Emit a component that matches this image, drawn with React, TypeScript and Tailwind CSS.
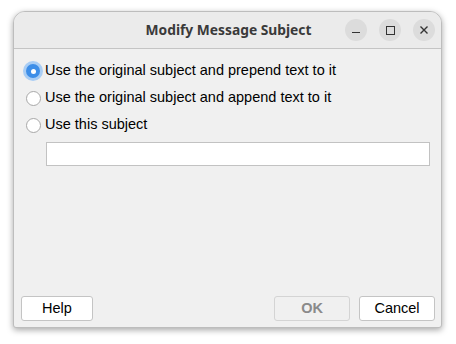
import React, { useState } from "react"

const options = [
	"Use the original subject and prepend text to it",
	"Use the original subject and append text to it",
	"Use this subject",
]

function Radio({ checked }: { checked: boolean }) {
	if (checked) {
		return (
			<span className="relative flex h-[16px] w-[16px] items-center justify-center">
				<span className="absolute -inset-[2px] rounded-full bg-[#a9cdf4]" />
				<span className="relative flex h-[14px] w-[14px] items-center justify-center rounded-full bg-[#3d8ee8]">
					<span className="h-[5px] w-[5px] rounded-full bg-white" />
				</span>
			</span>
		)
	}
	return (
		<span className="flex h-[16px] w-[16px] items-center justify-center">
			<span className="h-[15px] w-[15px] rounded-full border border-[#a8a8a8] bg-white" />
		</span>
	)
}

export default function App() {
	const [choice, setChoice] = useState(0)

	return (
		<div className="h-[344px] w-[456px] bg-white pl-[13px] pt-[11px]" style={{ fontFamily: "'Liberation Sans', Arial, sans-serif" }}>
			<div className="flex h-[317px] w-[429px] flex-col overflow-hidden rounded-t-[12px] rounded-b-[3px] border border-[#bdbdbd] bg-[#f0f0f0] shadow-[0_2px_6px_rgba(0,0,0,0.35)]">
				{/* title bar */}
				<div className="relative flex h-[37px] shrink-0 items-center justify-center border-b border-[#c4c4c4] bg-[#ebebeb]">
					<span className="pl-[2px] text-[13.8px] font-bold text-[#3a3a3a]" style={{ fontFamily: "'Noto Sans', sans-serif" }}>
						Modify Message Subject
					</span>
					<div className="absolute right-[6px] top-[7px] flex gap-[12px]">
						<button className="flex h-[22px] w-[22px] items-center justify-center rounded-full bg-[#dcdcdc]">
							<span className="mt-[5px] h-[1.5px] w-[8px] bg-[#333]" />
						</button>
						<button className="flex h-[22px] w-[22px] items-center justify-center rounded-full bg-[#dcdcdc]">
							<span className="h-[9px] w-[9px] border-[1.5px] border-[#333]" />
						</button>
						<button className="flex h-[22px] w-[22px] items-center justify-center rounded-full bg-[#dcdcdc]">
							<svg width="10" height="10" viewBox="0 0 10 10">
								<path d="M1.5 1.5 L8.5 8.5 M8.5 1.5 L1.5 8.5" stroke="#333" strokeWidth="1.4" />
							</svg>
						</button>
					</div>
				</div>

				{/* body */}
				<div className="flex flex-1 flex-col pb-[6px] pl-[7px] pr-[6px] pt-[13px]">
					<div className="flex flex-col gap-[9px] pl-[4px]">
						{options.map((o, i) => (
							<label key={o} className="flex h-[18px] cursor-default items-center gap-[4px] text-[14.5px] text-black" onClick={() => setChoice(i)}>
								<Radio checked={choice === i} />
								<span>{o}</span>
							</label>
						))}
					</div>
					<input className="ml-[25px] mt-[8px] h-[24px] w-[384px] border border-[#c2c2c2] bg-white px-1 text-[14px] outline-none" />

					<div className="mt-auto flex items-center">
						<button className="h-[25px] w-[72px] rounded-[3px] border border-[#c4c4c4] bg-white text-[14.5px] text-black">Help</button>
						<div className="flex-1" />
						<button disabled className="h-[25px] w-[76px] rounded-[3px] border border-[#d4d4d4] bg-[#f0f0f0] text-[14.5px] font-bold text-[#8a8a8a]">OK</button>
						<button className="ml-[9px] h-[25px] w-[76px] rounded-[3px] border border-[#c4c4c4] bg-white text-[14.5px] text-black">Cancel</button>
					</div>
				</div>
			</div>
		</div>
	)
}
